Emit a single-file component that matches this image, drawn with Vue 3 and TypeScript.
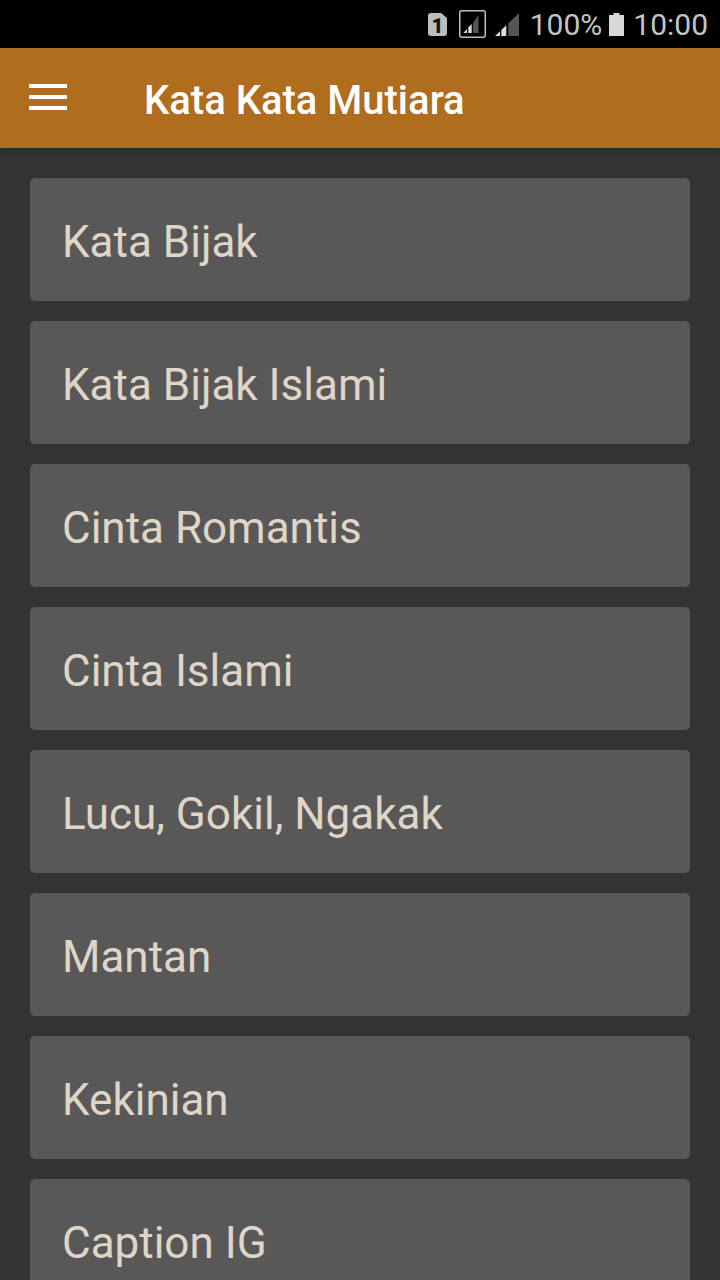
<script setup lang="ts">
const items: string[] = [
  'Kata Bijak',
  'Kata Bijak Islami',
  'Cinta Romantis',
  'Cinta Islami',
  'Lucu, Gokil, Ngakak',
  'Mantan',
  'Kekinian',
  'Caption IG',
]
</script>

<template>
  <div class="screen">
    <div class="status">
      <svg class="sim" width="19" height="23" viewBox="0 0 19 23">
        <path d="M3 0H13L19 5V20a3 3 0 0 1-3 3H3a3 3 0 0 1-3-3V3a3 3 0 0 1 3-3Z" fill="#bdbdbd" />
        <text x="9.500" y="19.500" text-anchor="middle" class="simnum">1</text>
      </svg>
      <svg class="sig1" width="27" height="28" viewBox="0 0 27 28">
        <rect x="0.750" y="0.750" width="25.500" height="26.500" rx="2" fill="none" stroke="#bdbdbd" stroke-width="1.500" />
        <path d="M14 13L19.500 5V23H14Z" fill="#555" />
        <path d="M4.300 23L8 19V23ZM9.300 23V17.500L12.700 14V23Z" fill="#ddd" />
      </svg>
      <svg class="sig2" width="24" height="23" viewBox="0 0 24 23">
        <path d="M13.300 10.300L24 0V23H13.300Z" fill="#555" />
        <path d="M0 23L5 18.200V23ZM6.300 23V17L11.300 12.200V23Z" fill="#ddd" />
      </svg>
      <span class="pct">100%</span>
      <svg class="batt" width="15" height="23" viewBox="0 0 15 23">
        <path d="M4.500 0h6v2H15v21H0V2h4.500Z" fill="#d8d8d8" />
      </svg>
      <span class="time">10:00</span>
    </div>
    <header class="toolbar">
      <svg class="menu" width="38" height="26" viewBox="0 0 38 26">
        <path d="M0 0h38v4H0ZM0 11h38v4H0ZM0 22h38v4H0Z" fill="#fff" />
      </svg>
      <h1 class="title">Kata Kata Mutiara</h1>
    </header>
    <main class="list">
      <div v-for="item in items" :key="item" class="card">{{ item }}</div>
    </main>
  </div>
</template>

<style scoped>
.screen {
  width: 720px;
  height: 1280px;
  overflow: hidden;
  display: flex;
  flex-direction: column;
  background: #333333;
  font-family: Roboto, "Liberation Sans", sans-serif;
}
.status {
  height: 48px;
  flex: none;
  background: #000;
  display: flex;
  align-items: center;
  justify-content: flex-end;
  padding-right: 12px;
  color: #c4c4c4;
  font-size: 30px;
}
.simnum {
  font-size: 20px;
  font-weight: 900;
  fill: #111;
}
.sim { margin-right: 12px; }
.sig1 { margin-right: 9px; }
.sig2 { margin-right: 11px; }
.pct { margin-right: 7px; }
.batt { margin-right: 9px; }
.toolbar {
  height: 100px;
  flex: none;
  box-sizing: border-box;
  padding-bottom: 2px;
  background: #b06d1e;
  display: flex;
  align-items: center;
  position: relative;
  z-index: 1;
  box-shadow: 0 2px 6px rgba(0, 0, 0, 0.25);
}
.menu { margin-left: 29px; }
.title {
  margin: 6px 0 0 77px;
  font-size: 40px;
  font-weight: 500;
  color: #fff;
}
.list {
  display: flex;
  flex-direction: column;
  gap: 20px;
  padding: 30px 30px 0;
}
.card {
  flex: none;
  height: 123px;
  box-sizing: border-box;
  padding-left: 32px;
  padding-top: 5px;
  display: flex;
  align-items: center;
  background: #585858;
  border-radius: 5px;
  color: #e0d6c8;
  font-size: 44px;
}
</style>
